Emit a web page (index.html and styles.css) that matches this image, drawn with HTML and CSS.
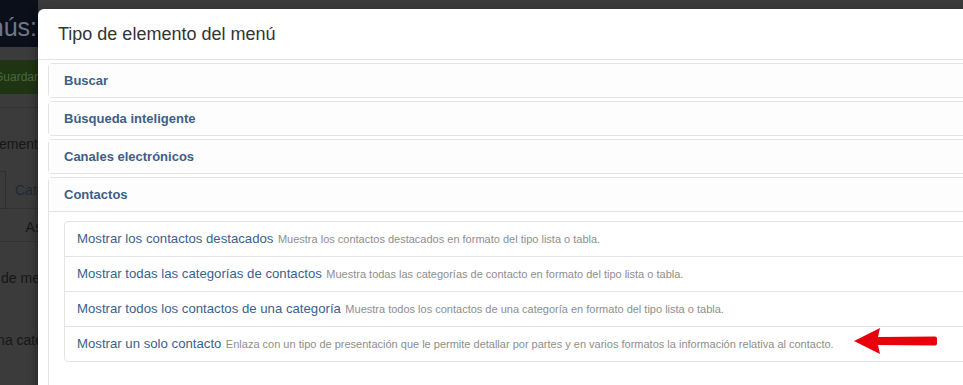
FILE: index.html
```html
<!DOCTYPE html>
<html lang="es">
<head>
    <meta charset="UTF-8">
    <meta name="viewport" content="width=device-width, initial-scale=1.0">
    <title>Tipo de elemento del menú</title>
    <link rel="stylesheet" href="styles.css">
</head>
<body>

<div class="page">
    <div class="navbar">
        <span class="page-title">Menús:</span>
    </div>
    <div class="toolbar">
        <span class="btn-save">Guardar</span>
    </div>
    <div class="page-body">
        <p class="row-text">Tipo de elemento</p>
        <div class="tabs">
            <span class="tab-box"></span>
            <span class="tab-link">Categoría</span>
        </div>
        <div class="sub-tabs">
            <span>Detalles</span>
            <span>Asociaciones</span>
        </div>
        <p class="row-text">Elemento de menú</p>
        <p class="row-text low">Mostrar una categoría</p>
    </div>
</div>

<div class="modal">
    <div class="modal-header">
        <h3>Tipo de elemento del menú</h3>
    </div>
    <div class="modal-body">
        <div class="panel">
            <div class="panel-heading">Buscar</div>
        </div>
        <div class="panel">
            <div class="panel-heading">Búsqueda inteligente</div>
        </div>
        <div class="panel">
            <div class="panel-heading">Canales electrónicos</div>
        </div>
        <div class="panel open">
            <div class="panel-heading">Contactos</div>
            <div class="panel-body">
                <ul class="list-group">
                    <li class="list-item"><a href="#">Mostrar los contactos destacados</a> <small>Muestra los contactos destacados en formato del tipo lista o tabla.</small></li>
                    <li class="list-item"><a href="#">Mostrar todas las categorías de contactos</a> <small>Muestra todas las categorías de contacto en formato del tipo lista o tabla.</small></li>
                    <li class="list-item"><a href="#">Mostrar todos los contactos de una categoría</a> <small>Muestra todos los contactos de una categoría en formato del tipo lista o tabla.</small></li>
                    <li class="list-item"><a href="#">Mostrar un solo contacto</a> <small>Enlaza con un tipo de presentación que le permite detallar por partes y en varios formatos la información relativa al contacto.</small></li>
                </ul>
            </div>
        </div>
    </div>
</div>

<svg class="arrow" width="90" height="30" viewBox="0 0 90 30">
    <path d="M1 15 L27 2 L25 11 L82 10.5 Q84 10.5 84 12.5 L84 17.5 Q84 19.5 82 19.5 L25 19 L27 28 Z" fill="#e8000c"/>
</svg>

</body>
</html>
```

FILE: styles.css
```css
body {
    margin: 0;
    width: 963px;
    height: 385px;
    overflow: hidden;
    position: relative;
    font-family: 'Liberation Sans', Arial, sans-serif;
    background-color: #3b3b3b;
}

/* darkened page behind the modal, only the strip left of it shows */
.page {
    width: 38px;
    height: 385px;
    overflow: hidden;
}

.navbar {
    height: 47px;
    background-color: #0a0f19;
    display: flex;
    align-items: center;
    margin-left: -45px;
}

.page-title {
    font-size: 25px;
    color: #6d7889;
    padding-top: 8px;
    white-space: nowrap;
}

.toolbar {
    height: 60px;
    border-bottom: 1px solid #333;
    display: flex;
    align-items: center;
    margin-left: -20px;
}

.btn-save {
    background-color: #1f3413;
    color: #4c6a3d;
    font-size: 12px;
    padding: 10px 14px;
}

.page-body {
    margin-left: -62px;
}

.row-text {
    margin: 28px 0 0;
    font-size: 14px;
    color: #161616;
    white-space: nowrap;
}

.row-text.low {
    margin-top: 46px;
}

.tabs {
    display: flex;
    align-items: center;
    gap: 14px;
    margin-top: 20px;
    margin-left: 20px;
    height: 36px;
    border-bottom: 1px solid #333;
}

.tab-box {
    flex: none;
    width: 46px;
    height: 36px;
    border: 1px solid #2e2e2e;
}

.tab-link {
    font-size: 14px;
    color: #1d2a38;
    margin-left: -5px;
}

.sub-tabs {
    display: flex;
    gap: 31px;
    font-size: 14px;
    color: #161616;
    padding: 10px 0 6px;
    border-bottom: 1px solid #333;
    margin-left: 6px;
    white-space: nowrap;
}

/* modal */
.modal {
    position: absolute;
    left: 38px;
    top: 9px;
    width: 1000px;
    height: 420px;
    background-color: #fff;
    border-radius: 6px;
    box-shadow: 0 3px 9px rgba(0, 0, 0, 0.5);
}

.modal-header {
    height: 50px;
    padding: 0 20px;
    border-bottom: 1px solid #e5e5e5;
    display: flex;
    align-items: center;
}

.modal-header h3 {
    margin: 0;
    font-size: 18px;
    font-weight: normal;
    color: #333;
}

.modal-body {
    padding: 3px 0 0 10px;
}

.panel {
    border: 1px solid #e3e3e3;
    border-radius: 4px;
    margin-bottom: 3px;
    background-color: #fff;
}

.panel-heading {
    height: 33px;
    line-height: 33px;
    padding-left: 15px;
    font-size: 13px;
    font-weight: bold;
    color: #3d5e8a;
    background-color: #fdfdfd;
}

.panel.open .panel-heading {
    border-bottom: 1px solid #e3e3e3;
}

.panel-body {
    padding: 9px 0 40px 15px;
}

.list-group {
    list-style: none;
    margin: 0;
    padding: 0;
}

.list-item {
    height: 34px;
    line-height: 32px;
    padding-left: 12px;
    border: 1px solid #e3e3e3;
    margin-bottom: -1px;
    white-space: nowrap;
}

.list-item:first-child {
    border-radius: 4px 0 0 0;
}

.list-item:last-child {
    border-radius: 0 0 0 4px;
}

.list-item a {
    font-size: 13.2px;
    color: #3a5f8e;
    text-decoration: none;
}

.list-item small {
    font-size: 11px;
    color: #8e8e8e;
}

.arrow {
    position: absolute;
    left: 853px;
    top: 326px;
}
```
